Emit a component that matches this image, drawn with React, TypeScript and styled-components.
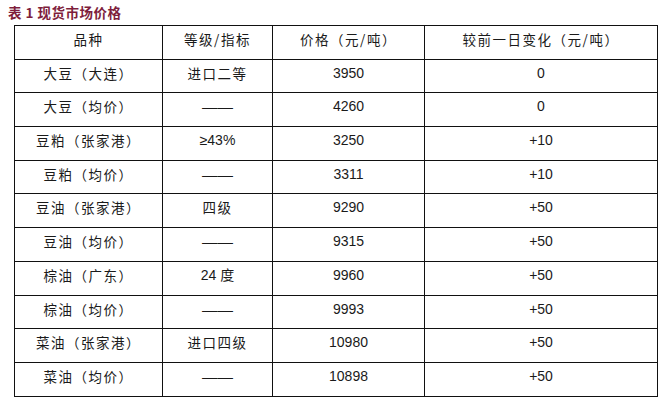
import styled, { createGlobalStyle } from "styled-components";

const GlobalStyle = createGlobalStyle`
    body {
        margin: 0;
        background: #ffffff;
        font-family: "Noto Sans CJK SC", "Liberation Sans", sans-serif;
    }
`

interface Row {
    name: string;
    grade: string;
    price: string;
    change: string;
}

const rows: Row[] = [
    { name: "大豆（大连）", grade: "进口二等", price: "3950", change: "0" },
    { name: "大豆（均价）", grade: "——", price: "4260", change: "0" },
    { name: "豆粕（张家港）", grade: "≥43%", price: "3250", change: "+10" },
    { name: "豆粕（均价）", grade: "——", price: "3311", change: "+10" },
    { name: "豆油（张家港）", grade: "四级", price: "9290", change: "+50" },
    { name: "豆油（均价）", grade: "——", price: "9315", change: "+50" },
    { name: "棕油（广东）", grade: "24 度", price: "9960", change: "+50" },
    { name: "棕油（均价）", grade: "——", price: "9993", change: "+50" },
    { name: "菜油（张家港）", grade: "进口四级", price: "10980", change: "+50" },
    { name: "菜油（均价）", grade: "——", price: "10898", change: "+50" },
]

function App() {
    return (
        <>
            <GlobalStyle />
            <Page>
                <Title>表 1 现货市场价格</Title>
                <PriceTable>
                    <colgroup>
                        <col style={{ width: 148 }} />
                        <col style={{ width: 110 }} />
                        <col style={{ width: 152 }} />
                        <col style={{ width: 233 }} />
                    </colgroup>
                    <thead>
                        <tr>
                            <Cell>品种</Cell>
                            <Cell>等级/指标</Cell>
                            <Cell>价格（元/吨）</Cell>
                            <Cell>较前一日变化（元/吨）</Cell>
                        </tr>
                    </thead>
                    <tbody>
                        {rows.map(r => (
                            <tr key={r.name}>
                                <Cell>{r.name}</Cell>
                                {r.grade === "——"
                                    ? <Cell><Dash>——</Dash></Cell>
                                    : <Cell $latin={r.grade === "≥43%" || r.grade === "24 度"}>{r.grade}</Cell>}
                                <Cell $latin>{r.price}</Cell>
                                <Cell $latin>{r.change}</Cell>
                            </tr>
                        ))}
                    </tbody>
                </PriceTable>
            </Page>
        </>
    )
}

const Page = styled.div`
    padding: 4px 0 0 14px;
`

const Title = styled.h1`
    margin: 0 0 0 -6px;
    height: 21px;
    font-size: 13.5px;
    line-height: 16px;
    font-weight: 700;
    color: #7e1e3c;
    letter-spacing: 0.5px;
`

const PriceTable = styled.table`
    border-collapse: collapse;
    table-layout: fixed;
    width: 644px;

    tr {
        height: 33.7px;
    }
`

const Cell = styled.td<{ $latin?: boolean }>`
    border: 1px solid #111111;
    padding: 3px 0 0 0;
    vertical-align: top;
    text-align: center;
    color: #1a1a1a;
    font-family: ${p => p.$latin
        ? '"Liberation Sans", "Noto Sans CJK SC", sans-serif'
        : '"Noto Sans CJK SC", sans-serif'};
    font-size: ${p => p.$latin ? '14px' : '13.5px'};
    line-height: 20px;
    letter-spacing: ${p => p.$latin ? '0' : '1.5px'};
`

const Dash = styled.span`
    font-family: "Liberation Sans", sans-serif;
    font-size: 15.5px;
    letter-spacing: 0;
`

export default App;
